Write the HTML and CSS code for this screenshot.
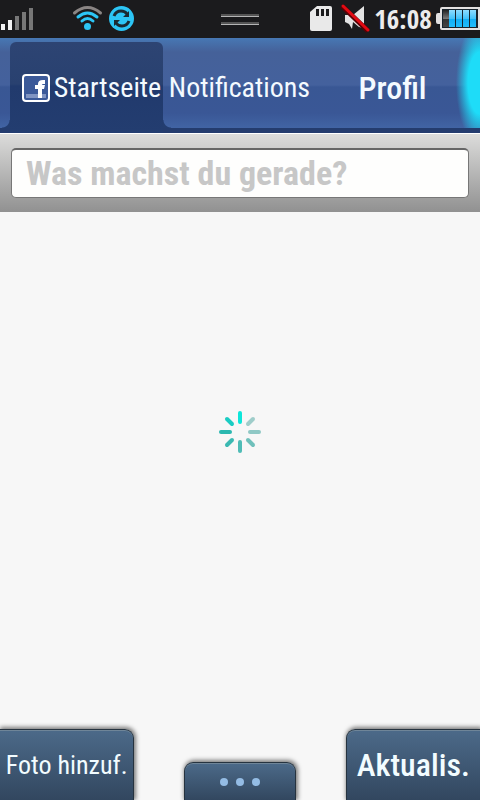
FILE: index.html
```html
<!DOCTYPE html>
<html lang="de">
<head>
<meta charset="utf-8">
<meta name="viewport" content="width=device-width, initial-scale=1">
<title>Startseite</title>
<link rel="stylesheet" href="styles.css">
</head>
<body>
<div class="status">
  <div class="status-group">
    <svg width="34" height="38" viewBox="0 0 34 38" aria-hidden="true">
      <path fill="#f2f2f2" d="M1 24h4v6H1zM8 20h4v10H8z"/>
      <path fill="#777" d="M15 16h4v14h-4zM22 12h4v18h-4zM29 8h4v22h-4z"/>
    </svg>
    <svg class="wifi" width="62" height="38" viewBox="0 0 62 38" aria-hidden="true">
      <g fill="none" stroke-width="3" stroke-linecap="round">
        <path stroke="#8a8584" d="M2.500 13Q15.500 2 28.500 13"/>
        <g stroke="#2cc5f5"><path d="M6 17Q15.500 9 25 17"/><path d="M10 21Q15.500 16 21 21"/></g>
      </g>
      <circle cx="15.500" cy="26.500" r="3.500" fill="#2cc5f5"/>
      <circle cx="49.500" cy="18.500" r="12.500" fill="#2cc5f5"/>
      <g fill="none" stroke="#1b2a33" stroke-width="3"><path d="M42 16q2-5 7-5 4 0 6 3"/><path d="M57 21q-2 5-7 5-4 0-6-3"/></g>
      <path fill="#1b2a33" d="M57 11v6h-6zM42 26v-6h6z"/>
    </svg>
  </div>
  <svg width="38" height="38" viewBox="0 0 38 38" aria-hidden="true">
    <path fill="#555" d="M0 14h38v2H0zM0 22h38v2H0z"/><path fill="#b5b5b5" d="M0 16h38v1H0zM0 24h38v1H0z"/>
  </svg>
  <div class="status-group status-end">
    <svg width="62" height="38" viewBox="0 0 62 38" aria-hidden="true">
      <path fill="#e9e9e9" d="M7 6h13q2 0 2 2v21q0 2-2 2H2q-2 0-2-2V12z"/>
      <path fill="#1b1b1d" d="M6 9h3v7H6zM11 9h3v7h-3zM16 9h3v7h-3z"/>
      <path fill="#e3e3e3" d="M35 15h8L54 6v22l-5-1-6-5-1 7-3-5-4-2z"/>
      <path stroke="#5b0004" stroke-width="5" d="M32 6l26 25"/><path stroke="#e20a12" stroke-width="3" stroke-linecap="round" d="M33 6l25 24"/>
    </svg>
    <time class="clock">16:08</time>
    <svg width="44" height="38" viewBox="0 0 44 38" aria-hidden="true">
      <defs>
        <linearGradient id="charge" x1="0" y1="0" x2="0" y2="1"><stop offset="0" stop-color="#8ddcff"/><stop offset=".5" stop-color="#42c2fa"/><stop offset=".55" stop-color="#12aff6"/><stop offset="1" stop-color="#21bdfb"/></linearGradient>
        <linearGradient id="empty" x1="0" y1="0" x2="0" y2="1"><stop offset="0" stop-color="#222"/><stop offset=".5" stop-color="#777"/><stop offset=".55" stop-color="#333"/><stop offset="1" stop-color="#444"/></linearGradient>
      </defs>
      <path fill="#e3e1e1" d="M0 15q0-2 2-2h2V9q0-2 2-2h38v23H6q-2 0-2-2v-4H2q-2 0-2-2z"/>
      <path fill="#17232c" d="M6 9h36v19H6z"/>
      <path fill="url(#empty)" d="M7 10h6v17H7z"/>
      <path fill="url(#charge)" d="M13 10h6v17h-6zM20 10h6v17h-6zM27 10h6v17h-6zM34 10h6v17h-6z"/>
    </svg>
  </div>
</div>
<nav class="tabs">
  <a class="tab tab-active" href="#start">
    <svg width="28" height="28" viewBox="0 0 28 28" aria-hidden="true">
      <rect x="1" y="1" width="26" height="26" rx="3" fill="#3c5a99" stroke="#fff" stroke-width="2"/>
      <path fill="#8195c2" d="M4 20h20v4H4z"/>
      <path fill="#fff" d="M16 24v-9h-3v-4h3V10q0-4 5-4h2v4h-2q-1 0-1 1h3l-1 4h-2v9z"/>
    </svg>
    <span>Startseite</span>
  </a>
  <a class="tab" href="#notifications">Notifications</a>
  <a class="tab tab-large" href="#profil">Profil</a>
</nav>
<form class="compose">
  <input type="text" aria-label="Was machst du gerade?" placeholder="Was machst du gerade?">
</form>
<main class="feed">
  <svg width="42" height="42" viewBox="-21 -21 42 42" role="img" aria-label="Laden">
    <g stroke-width="4" stroke-linecap="round">
      <path stroke="#0ee6da" d="M0-10v-9"/>
      <path stroke="#9fcdca" d="M8-8l5-5"/>
      <path stroke="#8fc8c5" d="M10 0h9"/>
      <path stroke="#6fc0bb" d="M8 8l5 5"/>
      <path stroke="#4fbcb6" d="M0 10v9"/>
      <path stroke="#3bb9b2" d="M-8 8l-5 5"/>
      <path stroke="#2bb8b0" d="M-10 0h-9"/>
      <path stroke="#1accc3" d="M-8-8l-5-5"/>
    </g>
  </svg>
</main>
<footer class="actions">
  <button class="action action-left" type="button">Foto hinzuf.</button>
  <button class="action action-more" type="button" aria-label="Mehr">
    <svg width="42" height="10" viewBox="0 0 42 10" aria-hidden="true"><g fill="#94bce4"><circle cx="5" cy="5" r="4"/><circle cx="21" cy="5" r="4"/><circle cx="37" cy="5" r="4"/></g></svg>
  </button>
  <button class="action action-right" type="button">Aktualis.</button>
</footer>
</body>
</html>
```
FILE: styles.css
```css
* { box-sizing: border-box; }

body {
  margin: 0;
  min-height: 100vh;
  display: flex;
  flex-direction: column;
  overflow-x: hidden;
  background: #f7f7f7;
  font-family: "Roboto Condensed", "Liberation Sans Narrow", "Open Sans Condensed", sans-serif;
  font-weight: 400;
}

svg { flex: none; display: block; }

.status {
  height: 38px;
  display: grid;
  grid-template-columns: 1fr auto 1fr;
  align-items: center;
  background: #1b1b1d;
  color: #ececec;
}
.status-group { display: flex; align-items: center; }
.status-end { justify-content: flex-end; }
.wifi { margin-left: 38px; }
.clock {
  width: 64px;
  padding-right: 2px;
  text-align: center;
  font: bold 27px/38px "Open Sans Condensed", "Roboto Condensed", sans-serif;
}

.tabs {
  height: 95px;
  padding: 4px 11px 0 10px;
  display: grid;
  grid-template-columns: repeat(3, minmax(0, 1fr));
  border-bottom: 5px solid #243c6e;
  background:
    radial-gradient(ellipse 24px 62px at 100% 50%, #1edcf8 50%, rgba(30, 220, 248, 0) 100%),
    linear-gradient(#4778b4 0, #456199 14px, #44619d 47px, #395794 49px, #3a5796 75px, #4164a4 90px);
}
.tab {
  display: flex;
  align-items: center;
  justify-content: center;
  gap: 4px;
  padding-top: 5px;
  color: #f4faff;
  font-size: 28px;
  text-decoration: none;
  white-space: nowrap;
}
.tab-active {
  position: relative;
  margin-bottom: -5px;
  padding: 5px 0 5px 10px;
  border-radius: 6px 6px 0 0;
  background: linear-gradient(#2d4473 0, #294170 42px, #213a6d 44px, #233d70 100%);
}
/* curved feet where the active tab meets the bar's lower edge */
.tab-active::before,
.tab-active::after {
  content: "";
  position: absolute;
  bottom: 5px;
  width: 8px;
  height: 8px;
}
.tab-active::before {
  right: 100%;
  background: radial-gradient(circle at 0 0, transparent 7px, #233d70 8px);
}
.tab-active::after {
  left: 100%;
  background: radial-gradient(circle at 100% 0, transparent 7px, #233d70 8px);
}
.tab-large { font-size: 32px; font-weight: 500; }

.compose {
  height: 79px;
  padding: 14px 11px 15px;
  border-top: 1px solid #fff;
  background: linear-gradient(#dcdcdb, #919191);
}
.compose input {
  display: block;
  width: 100%;
  height: 50px;
  padding: 0 14px 2px;
  border: 1px solid #777;
  border-top: 2px solid #666;
  border-radius: 5px;
  background: #fefefd;
  color: #333;
  font: bold 34px "Roboto Condensed", "Open Sans Condensed", sans-serif;
}
.compose input::placeholder { color: #c7c7c7; opacity: 1; }

.feed {
  flex: 1;
  padding-bottom: 78px;
  display: flex;
  align-items: center;
  justify-content: center;
}

.actions {
  display: flex;
  align-items: flex-end;
  justify-content: space-between;
}
.action {
  height: 71px;
  padding: 0;
  display: flex;
  align-items: center;
  justify-content: center;
  border: 1px solid #26333f;
  border-bottom: 0;
  background: linear-gradient(#4c6a89, #32475f);
  box-shadow: inset 0 1px 0 #6f8598, 1px -1px 4px 1px rgba(0, 0, 0, .5);
  color: #f2fcff;
  font-family: inherit;
  font-weight: inherit;
  white-space: nowrap;
}
.action-left {
  width: 28%;
  border-left: 0;
  border-radius: 0 9px 0 0;
  font-size: 26px;
}
.action-more {
  width: 112px;
  height: 38px;
  border-radius: 9px 9px 0 0;
}
.action-right {
  width: 28%;
  border-right: 0;
  border-radius: 9px 0 0 0;
  font-size: 32px;
  font-weight: 500;
}
```
